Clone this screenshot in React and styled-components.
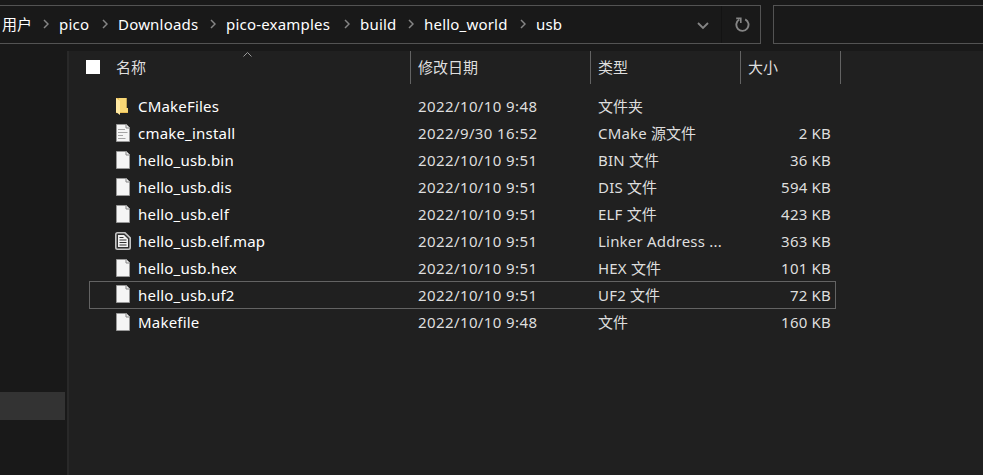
import React from "react";
import styled, { createGlobalStyle } from "styled-components";

const GlobalStyle = createGlobalStyle`
  html, body { margin: 0; background: #191919; overflow: hidden; }
  * { box-sizing: border-box; }
`;

const Explorer = styled.div`
  display: flex;
  flex-direction: column;
  width: 983px;
  height: 475px;
  background: #191919;
  font-family: "Noto Sans", "Noto Sans CJK SC", sans-serif;
  font-size: 15px;
  line-height: 20px;
  white-space: nowrap;
`;

const Toolbar = styled.header`
  display: flex;
  gap: 12px;
  height: 51px;
  padding-top: 5px;
`;

const AddressBar = styled.nav`
  display: flex;
  width: 761px;
  height: 39px;
  border: 1px solid #535353;
  border-left: 0;
`;

const SearchBox = styled.div`
  flex: 1;
  height: 39px;
  border: 1px solid #535353;
  border-right: 0;
`;

const Crumbs = styled.div`
  display: flex;
  flex: 1;
  align-items: center;
  padding: 0 0 1px 2px;
  color: #fff;
`;

const Crumb = styled.span`
  width: ${(p) => p.$width}px;
`;

const CrumbArrow = styled.svg`
  flex: none;
  width: 6px;
  height: 10px;
  margin: 0 10px 1px 11px;
`;

const DropButton = styled.div`
  display: flex;
  width: 38px;
  align-items: center;
  padding: 2px 0 0 14px;
  margin-left: auto;
`;

const RefreshButton = styled.div`
  display: flex;
  width: 39px;
  align-items: center;
  padding-left: 13px;
  border-left: 1px solid #131313;
`;

const Body = styled.div`
  display: flex;
  flex: 1;
`;

const Sidebar = styled.aside`
  width: 69px;
  padding-top: 341px;
  border-right: 2px solid #292929;
`;

const SidebarSelection = styled.div`
  width: 65px;
  height: 28px;
  background: #333;
`;

const Pane = styled.main`
  flex: 1;
  background: #202020;
`;

const Header = styled.div`
  display: grid;
  grid-template-columns: 342px 180px 150px 100px;
  height: 33px;
`;

const HeaderCell = styled.div`
  position: relative;
  display: flex;
  align-items: center;
  padding: 0 0 2px ${(p) => (p.$first ? 17 : 7)}px;
  border-right: 1px solid #636363;
  color: #dedede;
`;

const Checkbox = styled.span`
  width: 14px;
  height: 14px;
  margin: 1px 16px 0 0;
  background: #fff;
`;

const SortArrow = styled.svg`
  position: absolute;
  left: 173px;
  top: 0;
`;

const Rows = styled.div`
  padding: 9px 0 0 20px;
`;

const Row = styled.div`
  display: grid;
  grid-template-columns: 27px 280px 180px 150px 110px;
  width: 747px;
  height: ${(p) => (p.$focused ? 28 : 27)}px;
  margin-top: ${(p) => (p.$focused ? -1 : 0)}px;
  align-items: center;
  color: #dedede;
  outline: ${(p) => (p.$focused ? "1px solid #636363" : "none")};
  outline-offset: -1px;
`;

const IconCell = styled.span`
  display: flex;
  justify-content: flex-end;
  height: 18px;
  margin: 0 -15px 2px 0;
`;

const Cell = styled.span`
  padding: 0 0 1px 22px;
`;

const FileName = styled(Cell)`
  color: #fff;
`;

const FileSize = styled(Cell)`
  padding-right: 5px;
  text-align: right;
`;

const Latin = styled.span`
  letter-spacing: ${(p) => p.$spacing}px;
`;

const Han = styled.span`
  font-family: "Noto Sans CJK SC", sans-serif;
  font-size: 15px;
`;

function Label({ children, spacing = 0.2 }) {
  return children
    .split(/([\u4e00-\u9fff]+)/)
    .filter(Boolean)
    .map((run, i) =>
      /[\u4e00-\u9fff]/.test(run) ? (
        <Han key={i}>{run}</Han>
      ) : (
        <Latin key={i} $spacing={spacing}>{run}</Latin>
      )
    );
}

function FileIcon({ kind }) {
  if (kind === "folder")
    return (
      <svg width="16" height="18" viewBox="0 0 16 18">
        <path d="M1 1H11.5V11H13V16H1Z" fill="#e9bd55" />
        <path d="M4 1H11.5V11H13V15H4Z" fill="#f8d775" />
        <path d="M1 1L5 4V18L1 15Z" fill="#ffe9a2" />
      </svg>
    );
  if (kind === "map")
    return (
      <svg width="16" height="18" viewBox="0 0 16 18">
        <path d="M2.5 .8H10L15.2 5.8V15.5Q15.2 17.2 13.5 17.2H2.5Q.8 17.2.8 15.5V2.5Q.8.8 2.5 .8Z" fill="#303030" stroke="#c4c4c4" strokeWidth="1.6" />
        <path d="M3 3H9L13 7V15H3Z" fill="#f2f2f2" />
        <path d="M4.5 5.5H8.5M4.5 8H11.5M4.5 10.5H11.5M4.5 13H11.5" stroke="#303030" />
      </svg>
    );
  return (
    <svg width="16" height="18" viewBox="0 0 16 18">
      <path d="M1.5.5H11.5L14.5 3.5V17.5H1.5Z" fill="#f5f5f5" stroke="#999" />
      <path d="M11 .5V4H14.5" fill="#eee" stroke="#858585" />
      {kind === "text" && (
        <path d="M3 5.5H10M3 8.5H12.5M3 11.5H8M3 14.5H10.5" stroke="#a5a5a5" />
      )}
    </svg>
  );
}

const crumbs = [
  ["用户", 30],
  ["pico", 32],
  ["Downloads", 81],
  ["pico-examples", 107],
  ["build", 37],
  ["hello_world", 85],
  ["usb", 30],
];

const files = [
  { icon: "folder", name: "CMakeFiles", date: "2022/10/10 9:48", type: "文件夹", size: "" },
  { icon: "text", name: "cmake_install", date: "2022/9/30 16:52", type: "CMake 源文件", size: "2 KB" },
  { icon: "file", name: "hello_usb.bin", date: "2022/10/10 9:51", type: "BIN 文件", size: "36 KB" },
  { icon: "file", name: "hello_usb.dis", date: "2022/10/10 9:51", type: "DIS 文件", size: "594 KB" },
  { icon: "file", name: "hello_usb.elf", date: "2022/10/10 9:51", type: "ELF 文件", size: "423 KB" },
  { icon: "map", name: "hello_usb.elf.map", date: "2022/10/10 9:51", type: "Linker Address ...", size: "363 KB" },
  { icon: "file", name: "hello_usb.hex", date: "2022/10/10 9:51", type: "HEX 文件", size: "101 KB" },
  { icon: "file", name: "hello_usb.uf2", date: "2022/10/10 9:51", type: "UF2 文件", size: "72 KB", focused: true },
  { icon: "file", name: "Makefile", date: "2022/10/10 9:48", type: "文件", size: "160 KB" },
];

export default function App() {
  return (
    <Explorer>
      <GlobalStyle />
      <Toolbar>
        <AddressBar>
          <Crumbs>
            {crumbs.map(([text, width], i) => (
              <React.Fragment key={text}>
                {i > 0 && (
                  <CrumbArrow viewBox="0 0 6 10">
                    <path d="M1 1L5 5L1 9" fill="none" stroke="#858585" strokeWidth="1.5" />
                  </CrumbArrow>
                )}
                <Crumb $width={width}><Label>{text}</Label></Crumb>
              </React.Fragment>
            ))}
          </Crumbs>
          <DropButton>
            <svg width="12" height="8" viewBox="0 0 12 8">
              <path d="M1 1L6 6L11 1" fill="none" stroke="#858585" strokeWidth="1.8" />
            </svg>
          </DropButton>
          <RefreshButton>
            <svg width="15" height="16" viewBox="0 0 15 16">
              <path d="M10.2 2.3A6.1 6.1 0 1 1 4.3 2.5" fill="none" stroke="#858585" strokeWidth="1.9" />
              <path d="M1.2 1.4H5.8V6" fill="none" stroke="#858585" strokeWidth="1.6" />
            </svg>
          </RefreshButton>
        </AddressBar>
        <SearchBox />
      </Toolbar>
      <Body>
        <Sidebar><SidebarSelection /></Sidebar>
        <Pane>
          <Header>
            <HeaderCell $first>
              <Checkbox />
              <Label>名称</Label>
              <SortArrow width="11" height="7" viewBox="0 0 11 7">
                <path d="M1.5 5.5L5.5 1.5L9.5 5.5" fill="none" stroke="#999" />
              </SortArrow>
            </HeaderCell>
            <HeaderCell><Label>修改日期</Label></HeaderCell>
            <HeaderCell><Label>类型</Label></HeaderCell>
            <HeaderCell><Label>大小</Label></HeaderCell>
          </Header>
          <Rows>
            {files.map((f) => (
              <Row key={f.name} $focused={f.focused}>
                <IconCell><FileIcon kind={f.icon} /></IconCell>
                <FileName><Label>{f.name}</Label></FileName>
                <Cell><Label spacing={0.4}>{f.date}</Label></Cell>
                <Cell><Label spacing={0.2}>{f.type}</Label></Cell>
                <FileSize><Label>{f.size}</Label></FileSize>
              </Row>
            ))}
          </Rows>
        </Pane>
      </Body>
    </Explorer>
  );
}
